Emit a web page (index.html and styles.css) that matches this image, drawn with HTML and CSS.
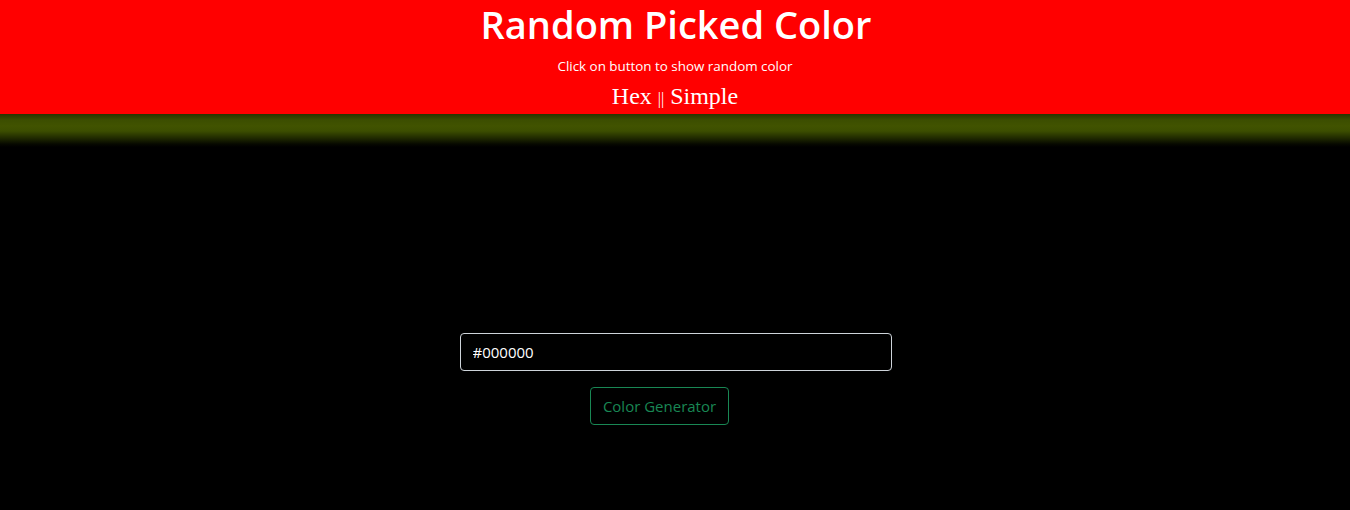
FILE: index.html
```html
<!DOCTYPE html>
<html>
<head>
<meta charset="utf-8">
<link rel="stylesheet" href="styles.css">
</head>
<body>
<header class="top">
  <h1 class="title">Random Picked Color</h1>
  <p class="sub">Click on button to show random color</p>
  <p class="mode">Hex <small class="sep">||</small> Simple</p>
</header>
<main class="panel">
  <input class="field" type="text" value="#000000">
  <button class="btn">Color Generator</button>
</main>
</body>
</html>
```
FILE: styles.css
```css
html, body {
  margin: 0;
  padding: 0;
  background: #000;
  height: 100%;
}
body {
  font-family: "Open Sans", "Noto Sans", sans-serif;
  color: #fff;
}
.top {
  background: #ff0000;
  height: 114px;
  text-align: center;
  position: relative;
}
.top::after {
  content: "";
  position: absolute;
  left: 0;
  right: 0;
  top: 100%;
  height: 33px;
  background: linear-gradient(to bottom, #283400 0px, #3c4e00 6px, #415300 12px, #3c4e00 17px, #202a00 24px, #070900 30px, #000 33px);
}
.title {
  margin: 0;
  padding-left: 2px;
  font-size: 38px;
  font-weight: 600;
  line-height: 48px;
}
.sub {
  margin: 8px 0 0;
  font-size: 13.4px;
  line-height: 20px;
}
.mode {
  margin: 6px 0 0;
  font-family: "Liberation Serif", serif;
  font-size: 24px;
  line-height: 28px;
}
.sep {
  font-size: 16px;
}
.panel {
  display: flex;
  flex-direction: column;
  align-items: center;
  padding-top: 219px;
}
.field {
  box-sizing: border-box;
  width: 432px;
  height: 38px;
  margin-left: 1px;
  background: #000;
  color: #fff;
  border: 1px solid #ced4da;
  border-radius: 4px;
  padding: 6px 12px;
  font-family: "Open Sans", sans-serif;
  font-size: 15px;
  outline: none;
}
.btn {
  margin-top: 16px;
  margin-right: 31px;
  box-sizing: border-box;
  height: 38px;
  background: transparent;
  color: #198754;
  border: 1px solid #198754;
  border-radius: 4px;
  font-family: "Open Sans", sans-serif;
  font-size: 15px;
  padding: 6px 12px;
  white-space: nowrap;
}
```
